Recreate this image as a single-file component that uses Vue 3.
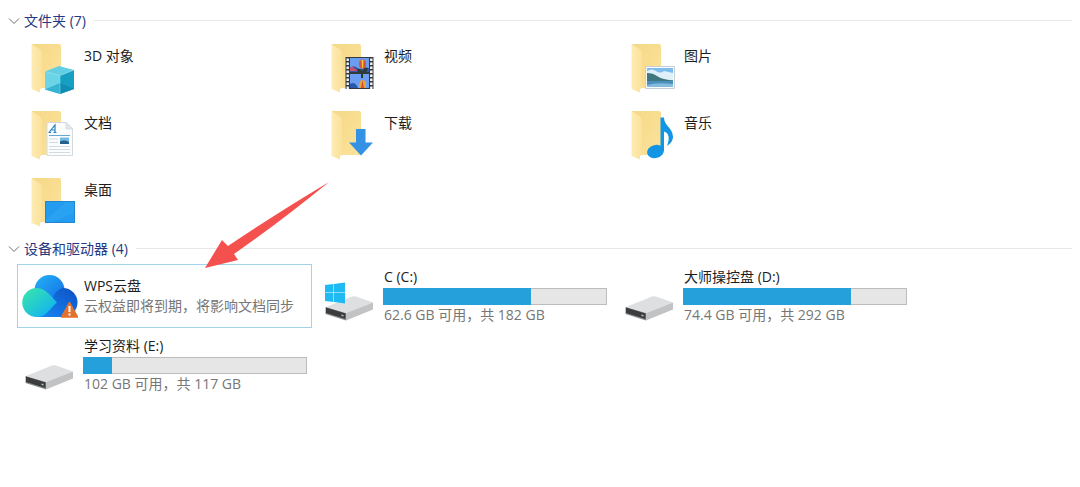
<script setup>
import { ref } from 'vue';

const folders=ref([
    { id: 1, name: "3D 对象", icon: "cube" },
    { id: 2, name: "视频", icon: "video" },
    { id: 3, name: "图片", icon: "picture" },
    { id: 4, name: "文档", icon: "doc" },
    { id: 5, name: "下载", icon: "download" },
    { id: 6, name: "音乐", icon: "music" },
    { id: 7, name: "桌面", icon: "desktop" }
]);

const drives=ref([
    { id: 1, name: "WPS云盘", detail: "云权益即将到期，将影响文档同步", cloud: true },
    { id: 2, name: "C (C:)", detail: "62.6 GB 可用，共 182 GB", used: 66, system: true },
    { id: 3, name: "大师操控盘 (D:)", detail: "74.4 GB 可用，共 292 GB", used: 75 },
    { id: 4, name: "学习资料 (E:)", detail: "102 GB 可用，共 117 GB", used: 13 }
]);

const selected=ref(1);
const showFolders=ref(true);
const showDrives=ref(true);
</script>
<template>
    <main class="explorer">
        <section>
            <button class="group" type="button" :aria-expanded="showFolders" @click="showFolders=!showFolders">
                <svg class="chevron" viewBox="0 0 12 12" aria-hidden="true"><path d="M1 3.5 6 8.5 11 3.5" /></svg>
                <span>文件夹 ({{ folders.length }})</span>
            </button>
            <ul v-if="showFolders" class="tiles">
                <li v-for="folder in folders" :key="folder.id" class="tile folder">
                    <svg class="icon" viewBox="0 0 60 60" aria-hidden="true">
                        <defs>
                            <linearGradient :id="'back'+folder.id" x1="0" y1="0" x2="1" y2="1">
                                <stop offset="0" stop-color="#f5d888" />
                                <stop offset="1" stop-color="#fce39a" />
                            </linearGradient>
                            <linearGradient :id="'flap'+folder.id" x1="0" y1="0" x2="1" y2="0">
                                <stop offset="0" stop-color="#fdecb4" />
                                <stop offset="1" stop-color="#fbe19a" />
                            </linearGradient>
                        </defs>
                        <path d="M14 7H41Q43 7 43 9V51H20Z" :fill="'url(#back'+folder.id+')'" />
                        <path d="M13.5 7 22 12.5Q24 14 24 16V51L22 52V55.5L13.5 52Z" :fill="'url(#flap'+folder.id+')'" />
                        <g v-if="folder.icon=='cube'">
                            <path d="M27 34.5 41 29 56 33 42 38.5Z" fill="#62cfe4" />
                            <path d="M27 34.5 42 38.5V57L27 52.5Z" fill="#6bd5e8" />
                            <path d="M42 38.5 56 33V52L42 57Z" fill="#179fc1" />
                            <path d="M27 52.5 42 46V57Z" fill="#35b4d2" />
                            <path d="M42 57V46L56 52Z" fill="#0f8db2" />
                            <path d="M27 34.5 42 38.5 56 33M42 38.5V57" fill="none" stroke="#94e2ee" stroke-width="0.5" />
                        </g>
                        <g v-else-if="folder.icon=='video'">
                            <path d="M27.5 20H55.5V52H27.5Z" fill="#35383c" />
                            <path d="M32 21H51V35H32ZM32 37H51V51H32Z" fill="#6b9df0" />
                            <path d="M32 31Q36 27 41 32L51 31V35H32Z" fill="#3559a8" />
                            <path d="M32 31q2-3 4 0t5 1v2h-9Z" fill="#c9506a" />
                            <path d="M29.7 21.500V52M53.3 21.500V52" stroke="#f6f6f6" stroke-width="2.400" stroke-dasharray="2.500 1.500" />
                            <ellipse cx="44.500" cy="27" rx="3.500" ry="4.500" fill="#d95335" />
                            <path d="M43.500 23h2l-0.500 8h-1Z" fill="#f3c745" />
                            <path d="M39 32q5-1 5 3 2-6 6-4-1 5-5 6v4h-2v-4q-4-1-4-5Z" fill="#2c3b33" />
                            <path d="M41 48q1-5 3.500-5 3.500 0 3.500 5v3h-7Z" fill="#e9a534" />
                            <path d="M44.500 43 46 51H43Z" fill="#d84e34" />
                            <path d="M32 47q5-3 8 4h-8Z" fill="#2a58ad" />
                        </g>
                        <g v-else-if="folder.icon=='picture'">
                            <path d="M27.500 29.500H56.500V51.500H27.500Z" fill="#f9fafb" stroke="#c7ced5" />
                            <path d="M29 31H55V50H29Z" fill="#7cbdec" />
                            <path d="M29 34q5-3 9 0t8 0l9 2v7H29Z" fill="#dff0f8" />
                            <path d="M29 36Q35 36 39 39T55 43.500V45H29Z" fill="#3f777c" />
                            <path d="M29 44H55V50H29Z" fill="#4a8fc0" />
                            <path d="M29 48Q39 45 55 47V50H29Z" fill="#86bcdb" />
                        </g>
                        <g v-else-if="folder.icon=='doc'">
                            <path d="M29 18.500H48L54.500 25V51.500H29Z" fill="#fbfcfd" stroke="#d3d9de" />
                            <path d="M48 18.500V25H54.500Z" fill="#e2e7eb" stroke="#d3d9de" stroke-width="0.7" />
                            <path d="M31 28.500 37 21V28.500M33 26H37M30.500 28.500H33M35.500 28.500H38.500" fill="none" stroke="#2b83bd" stroke-width="1.200" />
                            <path d="M31 31.500H52" stroke="#66a8cf" />
                            <path d="M31 35H40M31 38.500H40M31 42.500H52M31 45.500H52M31 48.500H52" stroke="#d3dbe1" />
                            <path d="M42 33.500H51V40H42Z" fill="#74b9e6" />
                            <path d="M42 37.500Q46 35.500 51 38V40H42Z" fill="#245f8c" />
                        </g>
                        <path v-else-if="folder.icon=='download'" d="M38 25H47.500V38.500H55L43 51.500 31 38.500H38Z" fill="#3392e3" />
                        <g v-else-if="folder.icon=='music'" fill="#1295e4">
                            <ellipse cx="37.500" cy="47.500" rx="8.500" ry="6.500" transform="rotate(-14 37.5 47.5)" />
                            <path d="M42.500 13.500H46C46 22 55 24 55 33Q55 38 49 42C52 34 51 29 46 27.500V47H42.500Z" />
                        </g>
                        <g v-else>
                            <path d="M27 30H57V52H27Z" fill="#2185d2" />
                            <path d="M28 31H56V51H28Z" fill="#229bf0" />
                            <path d="M48 31H56V42L35 51H28V49Z" fill="#38adf6" opacity="0.4" />
                        </g>
                    </svg>
                    <span class="name">{{ folder.name }}</span>
                </li>
            </ul>
        </section>
        <section>
            <button class="group" type="button" :aria-expanded="showDrives" @click="showDrives=!showDrives">
                <svg class="chevron" viewBox="0 0 12 12" aria-hidden="true"><path d="M1 3.5 6 8.5 11 3.5" /></svg>
                <span>设备和驱动器 ({{ drives.length }})</span>
            </button>
            <ul v-if="showDrives" class="tiles">
                <li v-for="drive in drives" :key="drive.id" class="tile drive" :class="{ selected: drive.id==selected }" @click="selected=drive.id">
                    <svg v-if="drive.cloud" class="icon" viewBox="0 0 60 60" aria-hidden="true">
                        <defs>
                            <linearGradient id="cloudTop" x1="0" y1="0" x2="1" y2="1">
                                <stop offset="0" stop-color="#24b3f5" />
                                <stop offset="1" stop-color="#1268e6" />
                            </linearGradient>
                            <linearGradient id="cloudRight" x1="0" y1="1" x2="1" y2="0">
                                <stop offset="0" stop-color="#1689f5" />
                                <stop offset="1" stop-color="#0d50c4" />
                            </linearGradient>
                            <linearGradient id="cloudLeft" x1="0" y1="0" x2="1" y2="1">
                                <stop offset="0.1" stop-color="#36e3ae" />
                                <stop offset="0.9" stop-color="#10b0f4" />
                            </linearGradient>
                        </defs>
                        <circle cx="31.500" cy="24" r="15" fill="url(#cloudTop)" />
                        <path d="M45 22A14.500 14.500 0 0 1 45 51H18L34 34Q38 23 45 22Z" fill="url(#cloudRight)" />
                        <path d="M18.500 22C27 22 32 29 39 36.500 32 42 29 51 19 51A14.500 14.500 0 0 1 18.500 22Z" fill="url(#cloudLeft)" />
                        <path d="M51.500 36.500 59.500 51H43.500Z" fill="#e3702c" stroke="#e3702c" stroke-width="1.500" stroke-linejoin="round" />
                        <path d="M51.500 40V46M51.500 47.500V49.500" stroke="#fff" stroke-width="2" />
                    </svg>
                    <svg v-else class="icon" viewBox="0 0 60 60" aria-hidden="true">
                        <path d="M8 41 34 30.500Q36 30 38 30.500L55 36.500 28 47Z" fill="#dedfe0" />
                        <path d="M28 47 55 36.500V43.500L28 54.500Z" fill="#c2c3c4" />
                        <path d="M7.500 41 28 47V54.500L7.500 48Z" fill="#8a8c8e" />
                        <path d="M8 41.500 27.500 47.500V53L8 47Z" fill="#3a3c3e" />
                        <path d="M23.500 48.500 25.500 49V50.500L23.500 50Z" fill="#b7c4bd" />
                        <path v-if="drive.system" d="M7 19 15.500 18V26.500H7ZM16 18 27 16.500V26.500H16ZM7 27H15.500V36L7 35ZM16 27H27V37.500L16 36Z" fill="#1fbaf2" />
                    </svg>
                    <div class="info">
                        <span>{{ drive.name }}</span>
                        <div v-if="drive.used" class="bar" role="progressbar" :aria-label="drive.name" :aria-valuenow="drive.used" aria-valuemin="0" aria-valuemax="100">
                            <div class="used" :style="{ width: drive.used+'%' }"></div>
                        </div>
                        <span class="detail">{{ drive.detail }}</span>
                    </div>
                </li>
            </ul>
        </section>
        <svg class="arrow" viewBox="0 0 126 88" aria-hidden="true">
            <path d="M1 87 18 59 24 65Q70 34 125 1 76 41 30 73L34 79Z" />
        </svg>
    </main>
</template>
<style>
body{
    margin: 0;
    background: #fff;
}
</style>
<style scoped>
.explorer{
    position: relative;
    padding: 8px 8px 16px;
    font-family: "Open Sans", "Noto Sans CJK SC", sans-serif;
    font-size: 14px;
    line-height: 20px;
    color: #1c1c1c;
}
.group{
    display: flex;
    align-items: center;
    gap: 4px;
    width: 100%;
    height: 25px;
    padding: 0;
    border: 0;
    background: none;
    font: inherit;
    color: #26387f;
    text-align: left;
}
.group::after{
    content: "";
    flex: 1;
    height: 1px;
    margin-left: 4px;
    background: #e8e8e8;
}
.chevron{
    width: 12px;
    height: 12px;
    fill: none;
    stroke: #6e6e6e;
}
.tiles{
    display: grid;
    grid-template-columns: repeat(auto-fill, 295px);
    gap: 5px;
    margin: 3px 0 4px;
    padding: 0 0 0 9px;
    list-style-type: none;
}
.tile{
    display: flex;
    gap: 5px;
    box-sizing: border-box;
    border: 1px solid transparent;
}
.folder{
    height: 62px;
}
.drive{
    align-items: center;
    height: 64px;
}
.selected{
    border-color: #a3d3ea;
}
.icon{
    flex: none;
    width: 60px;
    height: 60px;
}
.name{
    padding: 9px 0 0 1px;
}
.info{
    display: flex;
    flex-direction: column;
    width: 224px;
    white-space: nowrap;
}
.info span{
    padding-left: 1px;
}
.info .detail{
    color: #767676;
}
.bar{
    height: 17px;
    margin-top: 1px;
    background: #e6e6e6;
    box-shadow: inset 0 0 0 1px #bcbcbc;
}
.used{
    height: 100%;
    background: #26a0da;
}
.arrow{
    position: absolute;
    top: 181px;
    left: 204px;
    width: 126px;
    height: 88px;
    fill: #f4504e;
    pointer-events: none;
}
</style>
